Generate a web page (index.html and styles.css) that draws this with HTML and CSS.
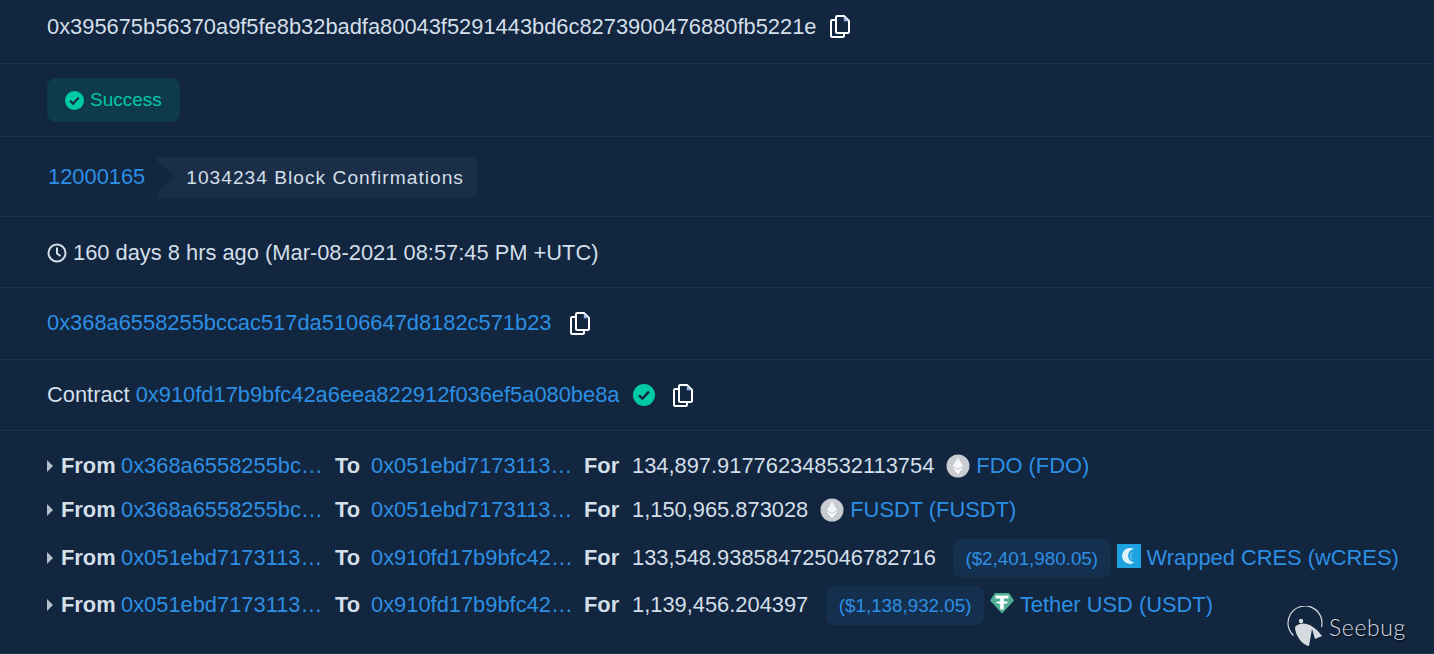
FILE: index.html
```html
<!DOCTYPE html>
<html lang="en">
<head>
    <meta charset="UTF-8">
    <title>Transaction Details</title>
    <link rel="stylesheet" href="styles.css">
</head>
<body>
    <svg class="sprites" width="0" height="0">
        <symbol id="copy" viewBox="0 0 20 23">
            <path d="M7.200 1H14l5 5v11c0 .7-.5 1-1.200 1H7.200C6.500 18 6 17.700 6 17V2.200C6 1.500 6.500 1 7.200 1z" fill="none" stroke="currentColor" stroke-width="2"/>
            <path d="M13.800 1.500v4.700H18.500z" fill="#9fb4ea"/>
            <path d="M6 5H2.200C1.500 5 1 5.500 1 6.200V20.800C1 21.500 1.500 22 2.200 22H12.800C13.500 22 14 21.500 14 20.800V18" fill="none" stroke="currentColor" stroke-width="2"/>
        </symbol>
        <symbol id="check" viewBox="0 0 20 20">
            <circle cx="10" cy="10" r="10" fill="#00c9a7"/>
            <path d="M5.500 10.300l3 3 6-6.300" fill="none" stroke="#12263f" stroke-width="2.200"/>
        </symbol>
        <symbol id="eth" viewBox="0 0 24 24">
            <circle cx="12" cy="12" r="11.500" fill="#c9ccd3"/>
            <path d="M12 3.500l5.200 8.500L12 15l-5.200-3z" fill="#f4f5f7"/>
            <path d="M12 16.300l5.200-3.100L12 20.500l-5.200-7.300z" fill="#ffffff"/>
        </symbol>
    </svg>

    <main>
        <section class="row row-hash">
            <span>0x395675b56370a9f5fe8b32badfa80043f5291443bd6c8273900476880fb5221e</span>
            <svg class="copy copy-hash"><use href="#copy"/></svg>
        </section>

        <section class="row row-status">
            <span class="status">
                <svg class="status-icon"><use href="#check"/></svg>
                Success
            </span>
        </section>

        <section class="row row-block">
            <a href="#">12000165</a>
            <span class="confirmations">1034234 Block Confirmations</span>
        </section>

        <section class="row row-time">
            <svg class="clock" viewBox="0 0 20 20">
                <circle cx="10" cy="10" r="8.500" fill="none" stroke="currentColor" stroke-width="2"/>
                <path d="M10 4.500V10.500L13.500 13" fill="none" stroke="currentColor" stroke-width="2"/>
            </svg>
            <span>160 days 8 hrs ago (Mar-08-2021 08:57:45 PM +UTC)</span>
        </section>

        <section class="row row-from">
            <a href="#">0x368a6558255bccac517da5106647d8182c571b23</a>
            <svg class="copy copy-from"><use href="#copy"/></svg>
        </section>

        <section class="row row-contract">
            <span>Contract&nbsp;</span><a href="#">0x910fd17b9bfc42a6eea822912f036ef5a080be8a</a>
            <svg class="verified"><use href="#check"/></svg>
            <svg class="copy copy-contract"><use href="#copy"/></svg>
        </section>

        <section class="row row-tokens">
            <div class="token token-1">
                <span class="caret"></span>
                <b class="label-from">From</b>
                <a href="#" class="addr">0x368a6558255bc…</a>
                <b class="label-to">To</b>
                <a href="#" class="addr">0x051ebd7173113…</a>
                <b class="label-for">For</b>
                <span class="amount">134,897.917762348532113754</span>
                <svg class="token-icon"><use href="#eth"/></svg>
                <a href="#">FDO (FDO)</a>
            </div>
            <div class="token token-2">
                <span class="caret"></span>
                <b class="label-from">From</b>
                <a href="#" class="addr">0x368a6558255bc…</a>
                <b class="label-to">To</b>
                <a href="#" class="addr">0x051ebd7173113…</a>
                <b class="label-for">For</b>
                <span class="amount">1,150,965.873028</span>
                <svg class="token-icon"><use href="#eth"/></svg>
                <a href="#">FUSDT (FUSDT)</a>
            </div>
            <div class="token token-3">
                <span class="caret"></span>
                <b class="label-from">From</b>
                <a href="#" class="addr">0x051ebd7173113…</a>
                <b class="label-to">To</b>
                <a href="#" class="addr">0x910fd17b9bfc42…</a>
                <b class="label-for">For</b>
                <span class="amount">133,548.938584725046782716</span>
                <span class="price">($2,401,980.05)</span>
                <svg class="token-icon-square" viewBox="0 0 24 24">
                    <rect width="24" height="24" fill="#1fa3e0"/>
                    <path d="M17 5A8 8 0 1 0 17.500 18.500 7 7 0 0 1 11 12 7 7 0 0 1 17 5z" fill="#dff2fb"/>
                    <path d="M15.500 8A5 5 0 0 0 15.500 16" fill="none" stroke="#8fd0ef" stroke-width="1"/>
                </svg>
                <a href="#">Wrapped CRES (wCRES)</a>
            </div>
            <div class="token token-4">
                <span class="caret"></span>
                <b class="label-from">From</b>
                <a href="#" class="addr">0x051ebd7173113…</a>
                <b class="label-to">To</b>
                <a href="#" class="addr">0x910fd17b9bfc42…</a>
                <b class="label-for">For</b>
                <span class="amount">1,139,456.204397</span>
                <span class="price price-usdt">($1,138,932.05)</span>
                <svg class="token-icon-tether" viewBox="0 0 24 22">
                    <path d="M5 1H19L24 8.500 12 21.500 0 8.500z" fill="#50af95"/>
                    <path d="M5.500 3.500H18.500V6.500H13.800V9.300C16.500 9.500 18 10 18 10.500S16.500 11.500 13.800 11.700V17.500H10.200V11.700C7.500 11.500 6 11 6 10.500S7.500 9.500 10.200 9.300V6.500H5.500z" fill="#ffffff"/>
                </svg>
                <a href="#">Tether USD (USDT)</a>
            </div>
        </section>
    </main>

    <!-- watermark sits over the page -->
    <div class="watermark">
        <svg class="watermark-logo" viewBox="0 0 38 42">
            <path d="M6.500 29.500A17 17 0 1 1 34.500 21" fill="none" stroke="#d5dbe1" stroke-width="1.200"/>
            <path d="M8 21C13 15 25 16 35 30L28 33 25 23 22 40C15 39 8 29 8 21z" fill="#d5dbe1"/>
            <circle cx="14" cy="15" r="2.200" fill="#d5dbe1"/>
        </svg>
        <span>Seebug</span>
    </div>
</body>
</html>
```

FILE: styles.css
```css
html, body {
    margin: 0;
    padding: 0;
}
body {
    height: 654px;
    overflow: hidden;
    position: relative;
    background-color: #12263f;
    color: #d3dfe9;
    font-family: "Liberation Sans", Arial, sans-serif;
    font-size: 21.87px;
}
a {
    color: #2d8fe3;
    text-decoration: none;
}
.sprites {
    position: absolute;
}

.row {
    display: flex;
    align-items: center;
    box-sizing: border-box;
    padding-left: 47px;
    border-bottom: 1px solid #1b3354;
}
.row-hash { height: 64px; padding-bottom: 10px; }
.row-status { height: 73px; }
.row-block { height: 80px; }
.row-time { height: 71px; padding-top: 2px; }
.row-from { height: 72px; padding-bottom: 1px; }
.row-contract { height: 71px; }
.row-tokens {
    display: block;
    height: 223px;
    padding-top: 13px;
}

.copy {
    color: #ffffff;
    width: 20px;
    height: 23px;
    flex: none;
}
.copy-hash { margin-left: 13px; }
.copy-from { margin-left: 19px; }
.copy-contract { margin-left: 18px; }

.status {
    display: flex;
    align-items: center;
    height: 44px;
    padding: 0 18px;
    border-radius: 9px;
    background-color: #0f3a4c;
    color: #00c9a7;
    font-size: 19px;
}
.status-icon {
    width: 19px;
    height: 19px;
    margin-right: 6px;
}

.row-block a {
    margin-left: 1px;
}
.confirmations {
    margin: 2px 0 0 12px;
    padding: 0 13px 0 29px;
    height: 41px;
    line-height: 41px;
    box-sizing: border-box;
    background-color: #1b2e48;
    border-radius: 0 6px 6px 0;
    clip-path: polygon(0 0, 100% 0, 100% 100%, 0 100%, 0 36px, 17px 20px, 0 4px);
    color: #d3dfe9;
    font-size: 19.2px;
    letter-spacing: 1px;
}

.clock {
    width: 20px;
    height: 20px;
    margin-right: 6px;
}

.verified {
    width: 22px;
    height: 22px;
    margin-left: 13px;
}

.token {
    display: flex;
    align-items: center;
    white-space: nowrap;
}
.token-1 { height: 44px; }
.token-2 { height: 44px; }
.token-3 { height: 50px; margin-top: 1px; }
.token-4 { height: 44px; }
.caret {
    width: 0;
    height: 0;
    margin-right: 8px;
    border-top: 6px solid transparent;
    border-bottom: 6px solid transparent;
    border-left: 6px solid #b4bfcc;
}
.label-from { width: 60px; }
.label-to { width: 36px; margin-left: 12px; }
.label-for { width: 48px; margin-left: 11px; }
.addr {
    width: 202px;
}
.amount {
    flex: none;
}
.token-icon {
    width: 24px;
    height: 24px;
    margin: 0 6px 0 12px;
}
.price {
    height: 39px;
    line-height: 39px;
    margin-left: 17px;
    padding: 0 12.500px;
    border-radius: 8px;
    background-color: #15304f;
    color: #2d8fe3;
    font-size: 18.8px;
}
.price-usdt { margin-left: 18px; }
.token-icon-square {
    width: 24px;
    height: 24px;
    margin: -4px 6px 0 6px;
}
.token-icon-tether {
    width: 24px;
    height: 22px;
    margin: -4px 6px 0 6px;
}

.watermark {
    position: absolute;
    left: 1287px;
    top: 606px;
    display: flex;
    align-items: center;
    color: #d5dbe1;
    font-family: Lato, sans-serif;
    font-size: 23px;
    font-weight: 300;
    letter-spacing: .6px;
    text-shadow: 1px 1px 2px #000000;
}
.watermark-logo {
    width: 38px;
    height: 42px;
    margin-right: 4px;
}
```
